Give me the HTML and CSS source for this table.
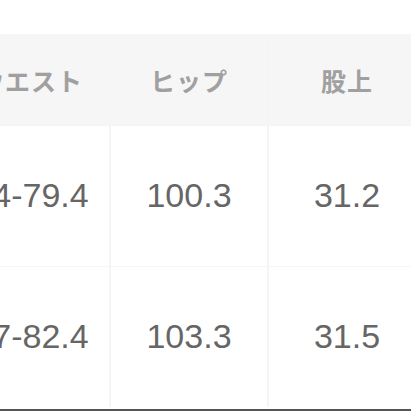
FILE: index.html
```html
<!DOCTYPE html>
<html lang="ja">
<head>
<meta charset="utf-8">
<link rel="stylesheet" href="styles.css">
</head>
<body>
<div class="frame">
  <div class="table">
    <div class="cell head">ウエスト</div>
    <div class="cell head">ヒップ</div>
    <div class="cell head">股上</div>
    <div class="cell val">64-79.4</div>
    <div class="cell val">100.3</div>
    <div class="cell val">31.2</div>
    <div class="cell val">67-82.4</div>
    <div class="cell val">103.3</div>
    <div class="cell val">31.5</div>
  </div>
</div>
</body>
</html>
```

FILE: styles.css
```css
html, body {
  margin: 0;
  padding: 0;
  background: #ffffff;
}
.frame {
  width: 411px;
  height: 411px;
  overflow: hidden;
  padding-top: 34px;
  box-sizing: border-box;
  border-bottom: 2px solid #555555;
}
.table {
  margin-left: -47px;
  display: grid;
  grid-template-columns: 156px 156px 156px;
  grid-template-rows: 91px 140px 140px;
  gap: 1px 2px;
  background: #f5f5f5;
  width: 472px;
}
.cell {
  display: flex;
  align-items: center;
  justify-content: center;
  background: #ffffff;
  white-space: nowrap;
}
.head {
  background: #f6f6f6;
  color: #a0a0a0;
  font-family: "Noto Sans CJK JP", sans-serif;
  font-weight: 700;
  font-size: 25px;
  letter-spacing: 1px;
}
.val {
  color: #666666;
  font-family: "Liberation Sans", Arial, sans-serif;
  font-size: 34px;
  padding-bottom: 2px;
}
```
